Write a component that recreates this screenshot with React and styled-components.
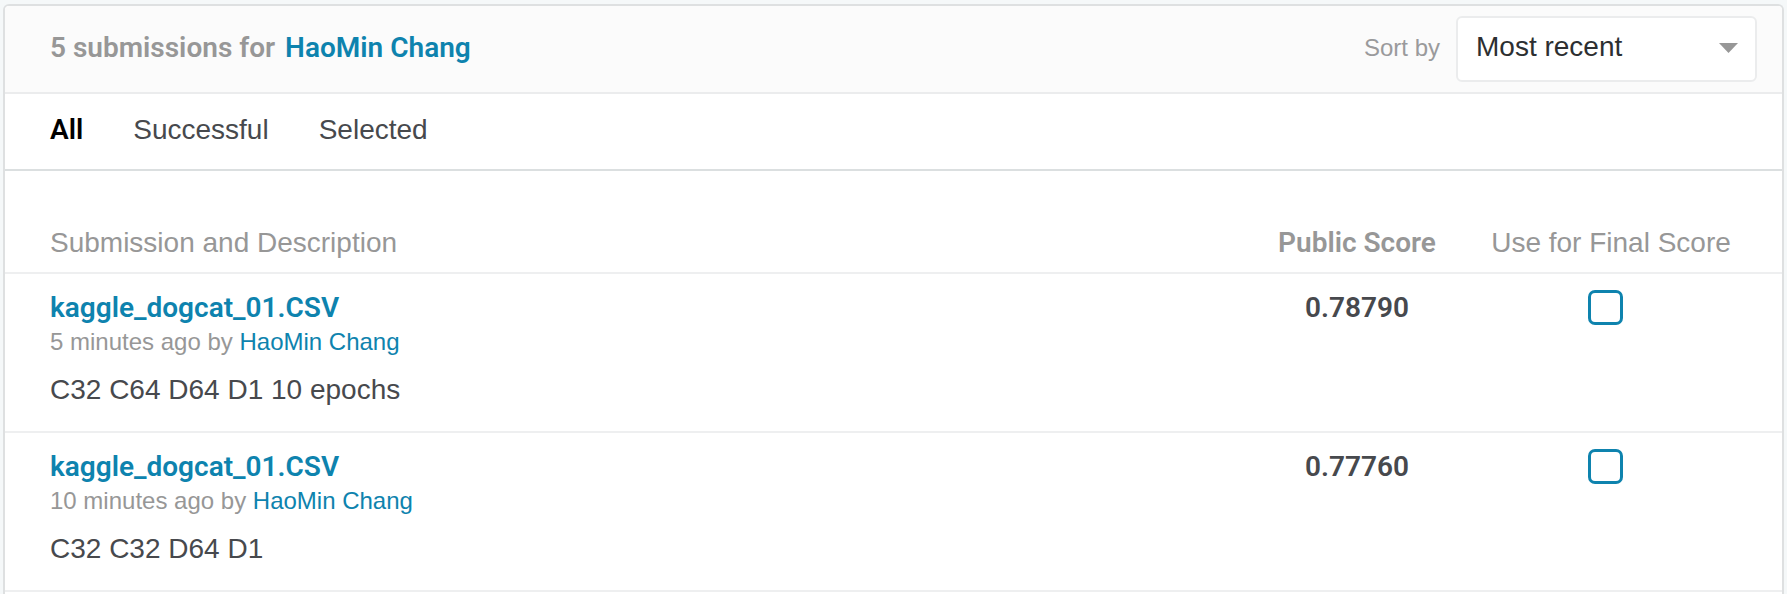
import React, { useState } from "react";
import styled, { createGlobalStyle } from "styled-components";

const GlobalStyle = createGlobalStyle`
  * { box-sizing: border-box; }
  body {
    margin: 0;
    background: #f5f8f9;
    color: #47494d;
    font-family: "Liberation Sans", Arial, sans-serif;
    font-size: 28px;
    line-height: 36px;
  }
`;

const strong = `
  font-family: Roboto, "Liberation Sans", sans-serif;
  font-weight: 600;
`;

const Page = styled.main`
  padding: 4px 3px 0;
`;

const Card = styled.section`
  min-height: calc(100vh - 4px);
  background: #fff;
  border: 2px solid #dee0e1;
  border-bottom: 0;
  border-radius: 6px 6px 0 0;
  overflow: hidden;
`;

const Header = styled.header`
  display: flex;
  align-items: center;
  justify-content: space-between;
  padding: 10px 25px 10px 45px;
  background: #fbfbfb;
  border-bottom: 2px solid #ebeced;
`;

const Title = styled.h1`
  display: flex;
  gap: 10px;
  margin: 0;
  padding-bottom: 2px;
  color: #979797;
  font-size: 28px;
  ${strong}
`;

const Link = styled.a`
  color: #0e83ae;
  text-decoration: none;
`;

const Sort = styled.div`
  display: flex;
  align-items: center;
  gap: 16px;
`;

const SortLabel = styled.label`
  padding-bottom: 2px;
  color: #9a9a9c;
  font-size: 24px;
`;

const SelectBox = styled.div`
  display: grid;
  align-items: center;
  width: 301px;

  > * { grid-area: 1 / 1; }
  > svg {
    justify-self: end;
    margin: 0 19px 2px 0;
    pointer-events: none;
  }
`;

const Select = styled.select`
  appearance: none;
  width: 100%;
  height: 66px;
  padding: 0 48px 4px 18px;
  border: 2px solid #ebeced;
  border-radius: 6px;
  background: #fff;
  color: #2d2f31;
  font: inherit;
`;

const Tabs = styled.nav`
  display: flex;
  gap: 50px;
  padding: 18px 45px 21px;
  border-bottom: 2px solid #dbdfe0;
`;

const Tab = styled.button`
  padding: 0;
  border: 0;
  background: none;
  color: ${(p) => (p.$active ? "#000" : "#47494d")};
  font: inherit;
  cursor: pointer;
  ${(p) => p.$active && strong}
`;

const Table = styled.table`
  width: 100%;
  table-layout: fixed;
  border-spacing: 0;
`;

const Column = styled.col`
  width: ${(p) => p.$width};
`;

const HeadCell = styled.th`
  padding: 54px ${(p) => p.$right || "0"} 11px ${(p) => p.$left || "0"};
  border-bottom: 2px solid #eeeff0;
  color: #979797;
  font-weight: 400;
  text-align: ${(p) => p.$align || "center"};
  white-space: nowrap;
  ${(p) => p.$strong && strong}
`;

const Cell = styled.td`
  padding: 16px ${(p) => p.$right || "0"} 23px ${(p) => p.$left || "0"};
  border-bottom: 2px solid #eeeff0;
  text-align: ${(p) => p.$align || "center"};
  vertical-align: top;
`;

const FileLink = styled(Link)`
  display: block;
  ${strong}
`;

const Meta = styled.div`
  color: #979797;
  font-size: 24px;
  line-height: 32px;
`;

const Description = styled.p`
  margin: 14px 0 0;
`;

const Score = styled.span`
  ${strong}
`;

const Checkbox = styled.input`
  appearance: none;
  display: block;
  width: 35px;
  height: 35px;
  margin: 0 auto;
  border: 3px solid #0e83ae;
  border-radius: 7px;
  background: #fff;

  &:checked { box-shadow: inset 0 0 0 5px #fff; background: #0e83ae; }
`;

const submissions = [
  { id: 1, file: "kaggle_dogcat_01.CSV", age: "5 minutes ago", text: "C32 C64 D64 D1 10 epochs", score: "0.78790" },
  { id: 2, file: "kaggle_dogcat_01.CSV", age: "10 minutes ago", text: "C32 C32 D64 D1", score: "0.77760" },
];

export default function App() {
  const [tab, setTab] = useState("All");
  return (
    <Page>
      <GlobalStyle />
      <Card>
        <Header>
          <Title>
            <span>5 submissions for</span>
            <Link href="#user">HaoMin Chang</Link>
          </Title>
          <Sort>
            <SortLabel htmlFor="sort">Sort by</SortLabel>
            <SelectBox>
              <Select id="sort" defaultValue="recent">
                <option value="recent">Most recent</option>
              </Select>
              <svg width="19" height="10" viewBox="0 0 19 10" aria-hidden="true">
                <path d="M0 0H19L9.5 10Z" fill="#979797" />
              </svg>
            </SelectBox>
          </Sort>
        </Header>
        <Tabs>
          {["All", "Successful", "Selected"].map((name) => (
            <Tab key={name} type="button" $active={tab === name} onClick={() => setTab(name)}>
              {name}
            </Tab>
          ))}
        </Tabs>
        <Table>
          <colgroup>
            <Column />
            <Column $width="198px" />
            <Column $width="326px" />
          </colgroup>
          <thead>
            <tr>
              <HeadCell scope="col" $align="left" $left="45px">Submission and Description</HeadCell>
              <HeadCell scope="col" $strong>Public Score</HeadCell>
              <HeadCell scope="col" $right="16px">Use for Final Score</HeadCell>
            </tr>
          </thead>
          <tbody>
            {submissions.map((s) => (
              <tr key={s.id}>
                <Cell $align="left" $left="45px">
                  <FileLink href="#file">{s.file}</FileLink>
                  <Meta>
                    {s.age} by <Link href="#user">HaoMin Chang</Link>
                  </Meta>
                  <Description>{s.text}</Description>
                </Cell>
                <Cell><Score>{s.score}</Score></Cell>
                <Cell $right="28px">
                  <Checkbox type="checkbox" aria-label={`Use ${s.file} (${s.age}) for final score`} />
                </Cell>
              </tr>
            ))}
          </tbody>
        </Table>
      </Card>
    </Page>
  );
}
